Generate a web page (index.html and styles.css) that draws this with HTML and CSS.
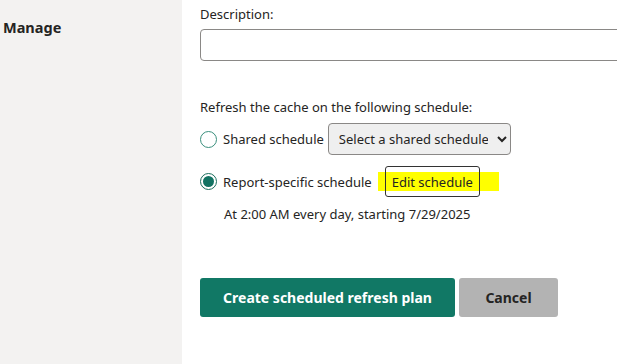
FILE: index.html
```html
<!DOCTYPE html>
<html lang="en">
<head>
    <meta charset="UTF-8">
    <title>Scheduled refresh plan</title>
    <link rel="stylesheet" href="styles.css">
</head>
<body>
    <div class="page">
        <div class="sidebar">
            <div class="sidebar-title">Manage</div>
        </div>

        <div class="main">
            <div class="field">
                <label for="description">Description:</label>
                <input type="text" id="description" class="text-input">
            </div>

            <div class="schedule">
                <p class="schedule-title">Refresh the cache on the following schedule:</p>

                <div class="option-row shared-row">
                    <input type="radio" name="schedule" id="shared" class="radio">
                    <label for="shared">Shared schedule</label>
                    <select class="select">
                        <option>Select a shared schedule</option>
                    </select>
                </div>

                <div class="option-row specific-row">
                    <input type="radio" name="schedule" id="specific" class="radio" checked>
                    <label for="specific">Report-specific schedule</label>
                    <span class="highlight">
                        <button class="edit-btn">Edit schedule</button>
                    </span>
                </div>

                <p class="schedule-summary">At 2:00 AM every day, starting 7/29/2025</p>
            </div>

            <div class="actions">
                <button class="btn btn-primary">Create scheduled refresh plan</button>
                <button class="btn btn-secondary">Cancel</button>
            </div>
        </div>
    </div>
</body>
</html>
```

FILE: styles.css
```css
* {
    margin: 0;
    padding: 0;
    box-sizing: border-box;
}

body {
    font-family: 'Noto Sans', 'Segoe UI', sans-serif;
    font-size: 13px;
    color: #252423;
    background-color: #fff;
}

.page {
    display: flex;
    min-height: 364px;
}

.sidebar {
    width: 182px;
    flex-shrink: 0;
    background-color: #f3f2f1;
    padding: 17px 3px;
}

.sidebar-title {
    font-size: 14.5px;
    font-weight: bold;
    color: #252423;
}

.main {
    flex: 1;
    padding: 5px 0 0 18px;
    overflow: hidden;
}

.field label {
    display: block;
    margin-bottom: 6px;
}

.text-input {
    display: block;
    width: 460px;
    height: 32px;
    border: 1px solid #8a8886;
    border-radius: 4px;
    font: inherit;
}

.schedule {
    margin-top: 37px;
}

.schedule-title {
    margin-bottom: 7px;
}

.option-row {
    display: flex;
    align-items: center;
    gap: 6px;
    min-height: 32px;
}

.specific-row {
    margin-top: 11px;
    min-height: 31px;
}

.radio {
    appearance: none;
    width: 17px;
    height: 17px;
    border: 1.5px solid #3a8f7d;
    border-radius: 50%;
    display: grid;
    place-items: center;
}

.radio:checked {
    border-color: #1b6e5d;
}

.radio:checked::after {
    content: "";
    width: 11px;
    height: 11px;
    border-radius: 50%;
    background-color: #127262;
}

.select {
    font: inherit;
    color: #252423;
    height: 32px;
    width: 183px;
    padding: 0 6px;
    border: 1px solid #8a8886;
    border-radius: 4px;
    background-color: #efefef;
    margin-left: -2px;
}

.highlight {
    background-color: #ffff00;
    padding: 0 19px 0 7px;
    height: 19px;
    display: flex;
    align-items: center;
}

.edit-btn {
    font: inherit;
    color: #252423;
    height: 31px;
    padding: 0 6px;
    border: 1px solid #333;
    border-radius: 3px;
    background-color: transparent;
}

.schedule-summary {
    margin: 8px 0 0 24px;
}

.actions {
    display: flex;
    gap: 4px;
    margin-top: 55px;
}

.btn {
    font: inherit;
    font-size: 14px;
    font-weight: bold;
    height: 39px;
    border: none;
    border-radius: 3px;
    cursor: pointer;
}

.btn-primary {
    width: 255px;
    background-color: #117865;
    color: #fff;
}

.btn-secondary {
    width: 99px;
    background-color: #b3b3b3;
    color: #252423;
}
```
